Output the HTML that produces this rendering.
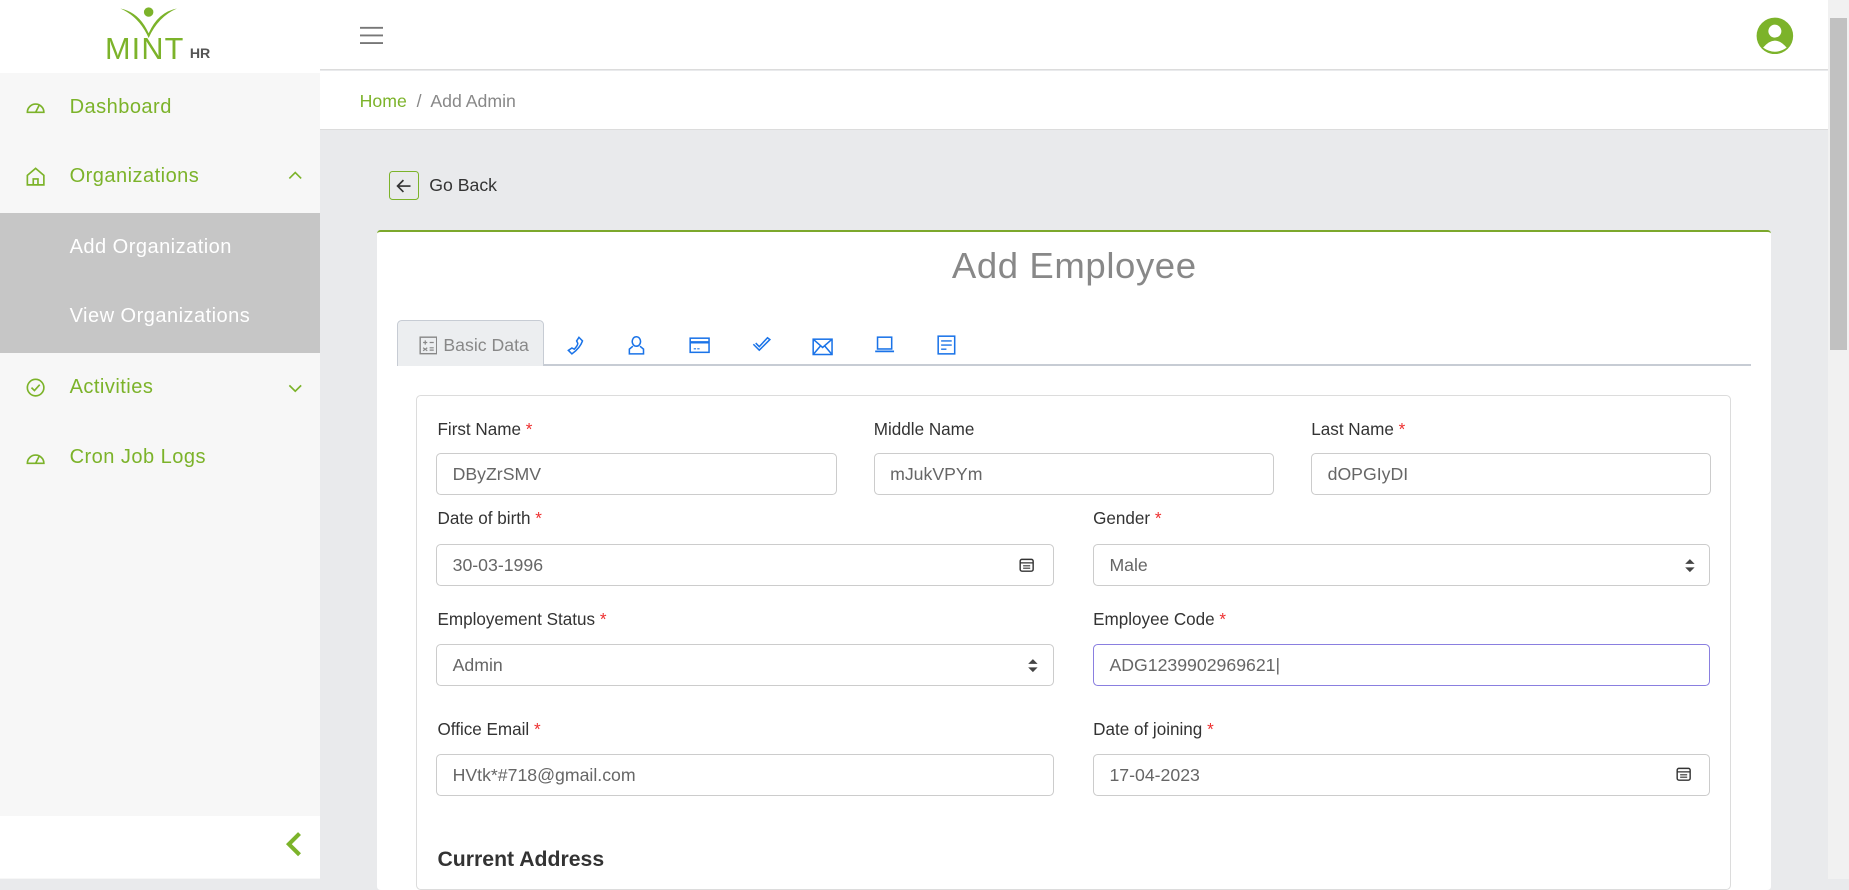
<!DOCTYPE html>
<html><head><meta charset="utf-8"><style>
html{zoom:1.17921}
*{box-sizing:border-box;margin:0;padding:0}
body{width:1568px;height:745px;overflow:hidden;position:relative;font-family:"Liberation Sans",sans-serif;background:#e9eaec;}
.a{position:absolute}
.side{left:0;top:0;width:271px;height:745px;background:#f7f7f7}
.logo{left:0;top:0;width:271px;height:62px;background:#fff}
.mi{left:59px;font-size:17px;color:#7cb32a;letter-spacing:0.4px}
.sub{left:59px;font-size:17px;color:#fff;letter-spacing:0.4px}
.ic{stroke:#7cb32a;fill:none;stroke-width:1.4}
.top{left:271px;top:0;width:1279px;height:59px;background:#fff;border-bottom:1px solid #dcdcdc}
.bc{left:271px;top:60px;width:1279px;height:50px;background:#fff;border-bottom:1px solid #dcdcdc}
.card{left:320px;top:195px;width:1182px;height:560px;background:#fff;border-top:2px solid #7ca82c;border-radius:3px}
.lbl{font-size:14.5px;color:#333}
.lbl b{color:#e33;font-weight:normal}
.inp{height:36px;border:1px solid #ccc;border-radius:4px;background:#fff;font-size:15px;color:#666;padding:9px 13px}
.ti{stroke:#1a73e8;fill:none;stroke-width:1.3}
</style></head><body>
<div class="a side"></div>
<div class="a logo">
<svg class="a" style="left:100px;top:4px" width="52" height="28" viewBox="0 0 52 28"><path d="M2 3 Q18 6 26 24 Q34 6 50 3 Q34 10 26 28 Q18 10 2 3Z" fill="#7cb32a"/><circle cx="26" cy="6" r="4" fill="#7cb32a"/></svg>
<div class="a" style="left:89px;top:27px;font-size:26px;color:#7cb32a;letter-spacing:1px">MINT</div>
<div class="a" style="left:161px;top:38px;font-size:12px;color:#555;font-weight:bold">HR</div>
</div>
<svg class="a" style="left:21px;top:82px" width="18" height="16"><path class="ic" d="M2 13 A7 7 0 1 1 16 13 Z M9 13 L12 7"/></svg>
<div class="a mi" style="top:81px">Dashboard</div>
<svg class="a" style="left:21px;top:141px" width="18" height="18"><path class="ic" d="M2 8 L9 2 L16 8 V16 H2Z M7 16 V11 H11 V16"/></svg>
<div class="a mi" style="top:140px">Organizations</div>
<svg class="a" style="left:243px;top:143px" width="14" height="10"><path class="ic" d="M2 8 L7 3 L12 8"/></svg>
<div class="a" style="left:0;top:181px;width:271px;height:118px;background:#c6c6c6"></div>
<div class="a sub" style="top:200px">Add Organization</div>
<div class="a sub" style="top:259px">View Organizations</div>
<svg class="a" style="left:21px;top:320px" width="18" height="18"><circle class="ic" cx="9" cy="9" r="7"/><path class="ic" d="M5.5 9 L8 11.5 L12.5 6.5"/></svg>
<div class="a mi" style="top:319px">Activities</div>
<svg class="a" style="left:243px;top:325px" width="14" height="10"><path class="ic" d="M2 2 L7 7 L12 2"/></svg>
<svg class="a" style="left:21px;top:380px" width="18" height="16"><path class="ic" d="M2 13 A7 7 0 1 1 16 13 Z M9 13 L12 7"/></svg>
<div class="a mi" style="top:378px">Cron Job Logs</div>
<div class="a" style="left:0;top:692px;width:271px;height:53px;background:#fff"></div>
<svg class="a" style="left:240px;top:704px" width="18" height="24"><path d="M14 3 L5 12 L14 21" stroke="#7cb32a" stroke-width="3.5" fill="none"/></svg>
<div class="a top"></div>
<svg class="a" style="left:305px;top:22px" width="20" height="16"><path d="M0 1.5H20M0 8H20M0 14.5H20" stroke="#777" stroke-width="1.6"/></svg>
<svg class="a" style="left:1489px;top:14px" width="32" height="32"><circle cx="16" cy="16" r="15.5" fill="#7cb32a"/><circle cx="16" cy="12" r="5.5" fill="#fff"/><path d="M6 26 Q16 14 26 26 Q16 33 6 26Z" fill="#fff"/></svg>
<div class="a bc"></div>
<div class="a" style="left:305px;top:77px;font-size:15px;color:#7cb32a">Home <span style="color:#888">&nbsp;/&nbsp; Add Admin</span></div>
<div class="a" style="left:330px;top:145px;width:25px;height:25px;border:1px solid #7cb32a;border-radius:3px"></div>
<svg class="a" style="left:334px;top:149px" width="17" height="17"><path d="M14 8.5H3M8 3.5 L3 8.5 L8 13.5" stroke="#333" stroke-width="1.4" fill="none"/></svg>
<div class="a" style="left:364px;top:148px;font-size:15px;color:#333">Go Back</div>
<div class="a card"></div>
<div class="a" style="left:320px;top:208px;width:1182px;text-align:center;font-size:31px;color:#888;letter-spacing:0.5px">Add Employee</div>
<div class="a" style="left:337px;top:309px;width:1148px;height:1px;background:#c7ccd4"></div>
<div class="a" style="left:337px;top:271px;width:124px;height:39px;background:#eceef0;border:1px solid #c7ccd4;border-bottom:none;border-radius:4px 4px 0 0"></div>
<svg class="a" style="left:355px;top:285px" width="16" height="16"><rect x="1" y="1" width="14" height="14" fill="none" stroke="#888" stroke-width="1.2"/><path d="M3.5 5.5H7M5.3 3.7V7.3M9 5.5H12.5M3.5 10L7 12.5M7 10L3.5 12.5M9 10H12.5M9 12H12.5" stroke="#888" stroke-width="1"/></svg>
<div class="a" style="left:376px;top:284px;font-size:15px;color:#888">Basic Data</div>
<svg class="a" style="left:480px;top:284px" width="16" height="18"><path class="ti" d="M11 2 L14 5 Q12 11 5 16 L2 13 L5 11 L7 12 Q10 9 10 7 L9 5Z"/></svg>
<svg class="a" style="left:532px;top:284px" width="16" height="18"><path class="ti" d="M8 1.5 A3.5 4 0 1 1 7.9 1.5Z M5 9.5 L2 12 V16 H14 V12 L11 9.5"/></svg>
<svg class="a" style="left:584px;top:286px" width="18" height="14"><rect class="ti" x="1" y="1" width="16" height="12"/><path d="M1 4.5H17" stroke="#1a73e8" stroke-width="2"/><path d="M4 10H6M7 10H9" stroke="#1a73e8"/></svg>
<svg class="a" style="left:637px;top:285px" width="18" height="14"><path class="ti" d="M2 7 L7 12 L16 3 L14 1.5 L7 9 L4 6"/></svg>
<svg class="a" style="left:689px;top:287px" width="18" height="15"><rect class="ti" x="1" y="1" width="16" height="13"/><path class="ti" d="M1 1 L9 8 L17 1M1 14 L7 7M17 14 L11 7"/></svg>
<svg class="a" style="left:741px;top:285px" width="18" height="15"><rect class="ti" x="3" y="1" width="12" height="10"/><path d="M1 13H17" stroke="#1a73e8" stroke-width="1.5"/></svg>
<svg class="a" style="left:795px;top:284px" width="16" height="17"><rect class="ti" x="1" y="1" width="14" height="15"/><path d="M3.5 5H12.5M3.5 8.5H12.5M3.5 12H8" stroke="#1a73e8" stroke-width="1.2"/></svg>
<div class="a" style="left:353px;top:335px;width:1115px;height:420px;border:1px solid #dcdcdc;border-radius:4px"></div>
<div class="a lbl" style="left:371px;top:356px">First Name <b>*</b></div>
<div class="a lbl" style="left:741px;top:356px">Middle Name</div>
<div class="a lbl" style="left:1112px;top:356px">Last Name <b>*</b></div>
<div class="a inp" style="left:370px;top:384px;width:340px">DByZrSMV</div>
<div class="a inp" style="left:741px;top:384px;width:339px">mJukVPYm</div>
<div class="a inp" style="left:1112px;top:384px;width:339px">dOPGIyDI</div>
<div class="a lbl" style="left:371px;top:432px">Date of birth <b>*</b></div>
<div class="a lbl" style="left:927px;top:432px">Gender <b>*</b></div>
<div class="a inp" style="left:370px;top:461px;width:524px">30-03-1996</div>
<div class="a inp" style="left:927px;top:461px;width:523px">Male</div>
<div class="a lbl" style="left:371px;top:517px">Employement Status <b>*</b></div>
<div class="a lbl" style="left:927px;top:517px">Employee Code <b>*</b></div>
<div class="a inp" style="left:370px;top:546px;width:524px">Admin</div>
<div class="a inp" style="left:927px;top:546px;width:523px;border-color:#8a7fe0">ADG1239902969621|</div>
<div class="a lbl" style="left:371px;top:611px">Office Email <b>*</b></div>
<div class="a lbl" style="left:927px;top:611px">Date of joining <b>*</b></div>
<div class="a inp" style="left:370px;top:639px;width:524px">HVtk*#718@gmail.com</div>
<div class="a inp" style="left:927px;top:639px;width:523px">17-04-2023</div>
<svg class="a" style="left:864px;top:472px" width="13" height="13"><rect x="1" y="2" width="11" height="10" rx="1.5" fill="none" stroke="#333" stroke-width="1.2"/><path d="M1 5H12M3.5 7.5H9.5M3.5 9.5H9.5" stroke="#333"/></svg>
<svg class="a" style="left:1421px;top:650px" width="13" height="13"><rect x="1" y="2" width="11" height="10" rx="1.5" fill="none" stroke="#333" stroke-width="1.2"/><path d="M1 5H12M3.5 7.5H9.5M3.5 9.5H9.5" stroke="#333"/></svg>
<svg class="a" style="left:1428px;top:473px" width="10" height="13"><path d="M1 5 L5 1 L9 5Z M1 8 L5 12 L9 8Z" fill="#444"/></svg>
<svg class="a" style="left:871px;top:558px" width="10" height="13"><path d="M1 5 L5 1 L9 5Z M1 8 L5 12 L9 8Z" fill="#444"/></svg>
<div class="a" style="left:371px;top:719px;font-size:18px;font-weight:bold;color:#333">Current Address</div>
<div class="a" style="left:1550px;top:0;width:18px;height:745px;background:#f1f1f1"></div>
<div class="a" style="left:1552px;top:15px;width:14px;height:282px;background:#c1c1c1"></div>
</body></html>
